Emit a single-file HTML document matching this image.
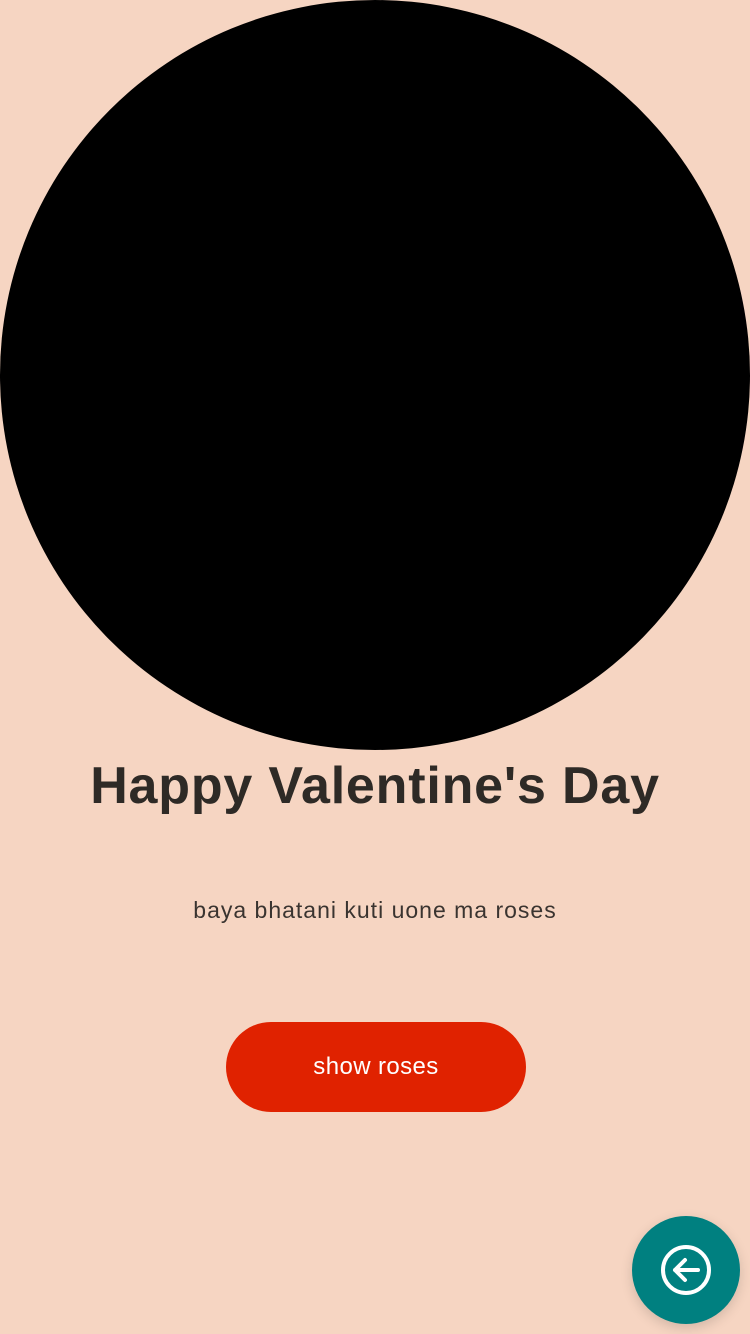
<!DOCTYPE html>
<html><head><style>
body{margin:0;width:750px;height:1334px;background:#f6d5c2;position:relative;overflow:hidden;font-family:"Liberation Sans",sans-serif}
.c{position:absolute;left:0;top:0;width:750px;height:750px;border-radius:50%;background:#000}
h1{position:absolute;top:756px;left:0;width:750px;text-align:center;margin:0;font-size:52px;letter-spacing:0.8px;font-weight:bold;color:#2e2a26;line-height:60px}
p{position:absolute;top:895px;left:0;width:750px;text-align:center;margin:0;font-size:23px;letter-spacing:1px;color:#3a3430;line-height:30px}
.b{position:absolute;left:226px;top:1022px;width:300px;height:90px;border-radius:45px;background:#e02200;color:#fff;font-size:24px;letter-spacing:0.4px;text-align:center;line-height:90px}
.f{position:absolute;left:632px;top:1216px;width:108px;height:108px;border-radius:50%;background:#008080;box-shadow:0 4px 12px rgba(0,0,0,.15)}
</style></head><body>
<div class="c"></div>
<h1>Happy Valentine's Day</h1>
<p>baya bhatani kuti uone ma roses</p>
<div class="b">show roses</div>
<div class="f"><svg width="108" height="108" viewBox="0 0 108 108"><circle cx="54" cy="54" r="23" fill="none" stroke="#fff" stroke-width="4"/><path d="M66 54H43M53 44L43 54L53 64" fill="none" stroke="#fff" stroke-width="4" stroke-linecap="round" stroke-linejoin="round"/></svg></div>
</body></html>
